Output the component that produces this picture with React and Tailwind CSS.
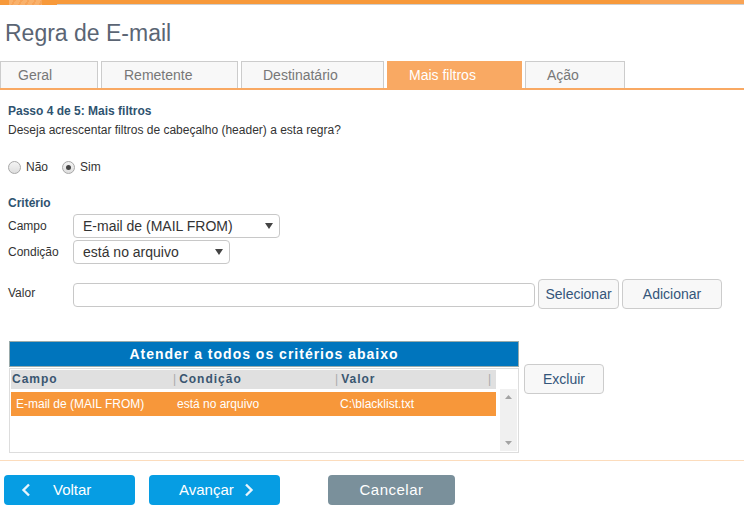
import React from 'react';

const tabs = [
  { label: 'Geral', w: 'w-[98px]', pad: 'pl-[17px]' },
  { label: 'Remetente', w: 'w-[137px]', pad: 'pl-[22px]' },
  { label: 'Destinatário', w: 'w-[143px]', pad: 'pl-[21px]' },
  { label: 'Mais filtros', w: 'w-[135px]', pad: 'pl-[21px]', active: true },
  { label: 'Ação', w: 'w-[100px]', pad: 'pl-[21px]' },
];

const Caret = () => (
  <svg width="8" height="6" viewBox="0 0 8 6" className="shrink-0">
    <path d="M0 0h8L4 6z" fill="#444" />
  </svg>
);

const Radio = ({ checked, label }) => (
  <label className="flex items-center gap-[5px]">
    <span className="w-[13px] h-[13px] rounded-full border border-[#a8a8a8] bg-gradient-to-b from-[#f4f4f4] to-[#dedede] flex items-center justify-center">
      {checked && <span className="w-[5px] h-[5px] rounded-full bg-[#444]" />}
    </span>
    <span>{label}</span>
  </label>
);

const App = () => {
  return (
    <div className="w-[744px] h-[512px] bg-white overflow-hidden text-[12px] text-[#333] font-['Liberation_Sans',Arial,sans-serif]">
      {/* top strip */}
      <div className="flex h-[5px]">
        <div className="w-[9px] h-[5px] bg-[#f7993a]" />
        <div className="w-[33px] h-[5px] bg-[repeating-linear-gradient(120deg,#f9b16b_0px,#f9b16b_4px,#f7a458_4px,#f7a458_6px)]" />
        <div className="w-[15px] h-[5px] bg-[#f7993a]" />
        <div className="flex-1 flex flex-col">
          <div className="h-[4px] flex">
            <div className="flex-1 bg-[#f7993a]" />
            <div className="w-[104px] bg-[#f9a455]" />
          </div>
          <div className="h-[1px] bg-[#cfcfcf]" />
        </div>
      </div>

      <h1 className="pl-[5px] pt-[14px] h-[56px] text-[23px] leading-[28px] text-[#5b6574]">Regra de E-mail</h1>

      {/* tabs */}
      <div className="flex gap-[3px] h-[29px] border-b-[2px] border-[#f9a963]">
        {tabs.map((t) => (
          <div
            key={t.label}
            className={`${t.w} ${t.pad} h-[27px] border border-b-0 text-[14px] leading-[26px] ${
              t.active
                ? 'bg-[#f9a963] border-[#f9a963] text-white'
                : 'bg-[#f8f8f8] border-[#cccccc] text-[#777]'
            }`}
          >
            {t.label}
          </div>
        ))}
      </div>

      <div className="px-[8px] pt-[13px]">
        <div className="font-bold text-[#2f5370] leading-[16px]">Passo 4 de 5: Mais filtros</div>
        <div className="leading-[16px] mt-[3px]">Deseja acrescentar filtros de cabeçalho (header) a esta regra?</div>

        <div className="flex gap-[14px] mt-[21px] leading-[16px]">
          <Radio label="Não" />
          <Radio label="Sim" checked />
        </div>

        <div className="font-bold text-[#2f5370] leading-[16px] mt-[20px]">Critério</div>

        <div className="flex items-center mt-[3px]">
          <span className="w-[65px]">Campo</span>
          <div className="w-[207px] h-[24px] border border-[#c8c8c8] rounded-[4px] flex items-center justify-between pl-[9px] pr-[6px] text-[14px] text-[#333]">
            <span>E-mail de (MAIL FROM)</span>
            <Caret />
          </div>
        </div>
        <div className="flex items-center mt-[2px]">
          <span className="w-[65px]">Condição</span>
          <div className="w-[157px] h-[24px] border border-[#c8c8c8] rounded-[4px] flex items-center justify-between pl-[9px] pr-[6px] text-[14px] text-[#333]">
            <span>está no arquivo</span>
            <Caret />
          </div>
        </div>

        <div className="flex items-start mt-[15px]">
          <span className="w-[65px] pt-[5px]">Valor</span>
          <div className="w-[462px] h-[24px] mt-[4px] border border-[#c8c8c8] rounded-[4px]" />
          <button className="ml-[3px] w-[81px] h-[30px] border border-[#cccccc] rounded-[4px] bg-[#f8f8f8] text-[14px] text-[#34557a]">
            Selecionar
          </button>
          <button className="ml-[3px] w-[100px] h-[30px] border border-[#cccccc] rounded-[4px] bg-[#f8f8f8] text-[14px] text-[#34557a]">
            Adicionar
          </button>
        </div>

        {/* criteria grid */}
        <div className="flex items-start mt-[32px] ml-[1px]">
          <div className="w-[510px]">
            <div className="h-[26px] bg-[#0075bd] border border-[#9aa] text-white font-bold text-[14px] tracking-[1px] text-center leading-[24px]">
              Atender a todos os critérios abaixo
            </div>
            <div className="h-[85px] mt-[1px] border border-[#dddddd] p-[1px] flex">
              <div className="flex-1 flex flex-col">
                <div className="h-[19px] bg-[#e0e0e0] flex font-bold text-[#3a5670] tracking-[1px] leading-[19px]">
                  <div className="w-[162px] pl-[1px]">Campo</div>
                  <div className="w-[162px] flex"><span className="text-[#aaa] font-normal mr-[2px]">|</span>Condição</div>
                  <div className="flex-1 flex"><span className="text-[#aaa] font-normal mr-[2px]">|</span>Valor</div>
                  <div className="w-[8px] text-[#aaa] font-normal">|</div>
                </div>
                <div className="h-[24px] mt-[3px] bg-[#f7973a] text-white flex leading-[24px]">
                  <div className="w-[164px] pl-[5px]">E-mail de (MAIL FROM)</div>
                  <div className="w-[160px] pl-[2px]">está no arquivo</div>
                  <div className="flex-1 pl-[5px]">C:\blacklist.txt</div>
                </div>
              </div>
              <div className="w-[17px] mt-[19px] bg-[#f0f0f0] flex flex-col items-center justify-between py-[6px] ml-[4px]">
                <svg width="7" height="4" viewBox="0 0 7 4"><path d="M0 4L3.5 0L7 4z" fill="#a3a3a3" /></svg>
                <svg width="7" height="4" viewBox="0 0 7 4"><path d="M0 0h7L3.5 4z" fill="#a3a3a3" /></svg>
              </div>
            </div>
          </div>
          <button className="ml-[5px] mt-[23px] w-[80px] h-[30px] border border-[#cccccc] rounded-[4px] bg-[#f8f8f8] text-[14px] text-[#34557a]">
            Excluir
          </button>
        </div>
      </div>

      <div className="h-[1px] bg-[#fcdcbc] mt-[7px]" />

      {/* footer buttons */}
      <div className="flex items-center mt-[14px] pl-[4px]">
        <button className="w-[131px] h-[30px] rounded-[4px] bg-[#069de3] text-white text-[15px] flex items-center pl-[17px]">
          <svg width="10" height="14" viewBox="0 0 10 14" className="mr-[22px]">
            <path d="M8 1.5L2.5 7L8 12.5" fill="none" stroke="#e8f4fc" strokeWidth="2.4" />
          </svg>
          Voltar
        </button>
        <button className="ml-[14px] w-[131px] h-[30px] rounded-[4px] bg-[#069de3] text-white text-[15px] flex items-center pl-[30px]">
          Avançar
          <svg width="10" height="14" viewBox="0 0 10 14" className="ml-[10px]">
            <path d="M2 1.5L7.5 7L2 12.5" fill="none" stroke="#e8f4fc" strokeWidth="2.4" />
          </svg>
        </button>
        <button className="ml-[48px] w-[127px] h-[30px] rounded-[4px] bg-[#7a909b] text-white text-[15px] tracking-[0.5px]">
          Cancelar
        </button>
      </div>
    </div>
  );
};

export default App;
